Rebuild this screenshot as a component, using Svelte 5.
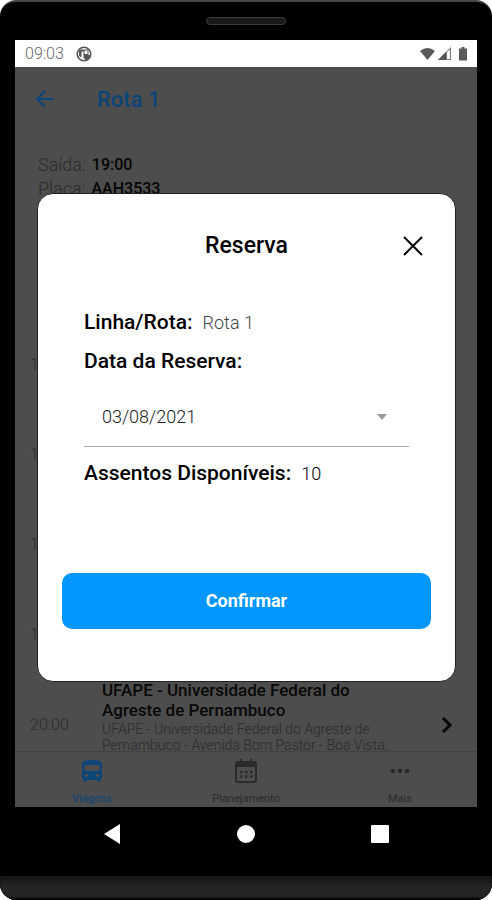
<script>
    let dates = ["03/08/2021"];
    let selected = dates[0];

    // earlier stops sit behind the dialog
    const stops = ["1", "1", "1", "1"];
</script>

<div class="phone">
    <div class="speaker"><span></span></div>

    <div class="screen">
        <div class="status">
            <span class="clock">09:03</span>
            <svg class="badge" width="16" height="16" viewBox="0 0 16 16">
                <circle cx="8" cy="8" r="6.800" fill="#fff" stroke="#555" stroke-width="1.600" />
                <path d="M4 3.500H12.500V9H9V12.500H7.500V5.500H5.500V11.500L3 10V5Z" fill="#555" />
                <path d="M8.500 4.500H11.500V8H8.500Z" fill="#fff" />
                <path d="M9 9H14.500Q13.500 13.500 9 15Z" fill="#555" />
            </svg>
            <svg class="signals" width="50" height="16" viewBox="0 0 50 16">
                <path d="M1 5Q8.500 -1 16 5L8.500 14Z" fill="#5a5a5a" />
                <path d="M19 14L32 1V14Z" fill="#777" />
                <path d="M19 14L27 6V14Z" fill="#555" />
                <path d="M28 6L31 3.500V13H28Z" fill="#fff" />
                <path d="M40 2.500h2.500V1h3v1.500H48V14.500H40Z" fill="#5a5a5a" />
            </svg>
        </div>

        <div class="app">
            <div class="content">
                <header>
                    <button class="back" aria-label="Voltar">
                        <svg width="20" height="20" viewBox="0 0 20 20" fill="none" stroke="currentColor" stroke-width="2">
                            <path d="M18.500 10H3M10 2L2 10L10 18" />
                        </svg>
                    </button>
                    <h1>Rota 1</h1>
                </header>

                <div class="info">
                    <p>Saída: <b>19:00</b></p>
                    <p>Placa: <b>AAH3533</b></p>
                </div>

                <div class="stops">
                    {#each stops as time}
                        <div class="stop"><span class="time">{time}</span></div>
                    {/each}
                    <div class="stop">
                        <span class="time">20:00</span>
                        <div class="place">
                            <h2>UFAPE - Universidade Federal do Agreste de Pernambuco</h2>
                            <p>UFAPE - Universidade Federal do Agreste de Pernambuco - Avenida Bom Pastor - Boa Vista,</p>
                        </div>
                        <svg class="chevron" width="12" height="18" viewBox="0 0 12 18" fill="none" stroke="#080808" stroke-width="3">
                            <path d="M2 2L9 9L2 16" />
                        </svg>
                    </div>
                </div>

                <nav class="tabs">
                    <a href="#viagens" class="active">
                        <svg width="22" height="24" viewBox="0 0 22 24">
                            <path fill="currentColor" fill-rule="evenodd" d="M1 5Q1 1 11 1Q21 1 21 5V18Q21 19.500 19.500 20.500V22Q19.500 23 18.500 23H17.500Q16.500 23 16.500 22V21H5.500V22Q5.500 23 4.500 23H3.500Q2.500 23 2.500 22V20.500Q1 19.500 1 18ZM3.500 6V12H18.500V6ZM5.500 14.500A1.800 1.800 0 1 0 5.500 18.100A1.800 1.800 0 1 0 5.500 14.500ZM16.500 14.500A1.800 1.800 0 1 0 16.500 18.100A1.800 1.800 0 1 0 16.500 14.500Z" />
                        </svg>
                        <span>Viagens</span>
                    </a>
                    <a href="#planejamento">
                        <svg width="22" height="24" viewBox="0 0 22 24" fill="none" stroke="currentColor">
                            <rect x="1" y="3" width="20" height="20" rx="2" stroke-width="2" />
                            <path d="M1 6H21" stroke-width="4" />
                            <path d="M6 0V4M16 0V4" stroke-width="2" />
                            <path d="M5 13H17.500M5 17.500H17.500" stroke-width="2.500" stroke-dasharray="2.500 2.500" />
                        </svg>
                        <span>Planejamento</span>
                    </a>
                    <a href="#mais">
                        <svg width="22" height="24" viewBox="0 0 22 24" fill="currentColor">
                            <circle cx="4" cy="12" r="2.300" />
                            <circle cx="11" cy="12" r="2.300" />
                            <circle cx="18" cy="12" r="2.300" />
                        </svg>
                        <span>Mais</span>
                    </a>
                </nav>
            </div>

            <div class="overlay">
                <form class="modal" on:submit|preventDefault>
                    <div class="modal-header">
                        <h3>Reserva</h3>
                        <button type="button" class="close" aria-label="Fechar">
                            <svg width="20" height="20" viewBox="0 0 20 20" fill="none" stroke="#000" stroke-width="2">
                                <path d="M1 1L19 19M19 1L1 19" />
                            </svg>
                        </button>
                    </div>
                    <div class="details">
                        <p><b>Linha/Rota:</b><span class="muted">Rota 1</span></p>
                        <label for="date">Data da Reserva:</label>
                        <div class="select">
                            <select id="date" bind:value={selected}>
                                {#each dates as date}
                                    <option value={date}>{date}</option>
                                {/each}
                            </select>
                            <svg width="10" height="6" viewBox="0 0 10 6"><path d="M0 0H10L5 6Z" fill="#999" /></svg>
                        </div>
                        <p><b>Assentos Disponíveis:</b><span>10</span></p>
                    </div>
                    <button class="confirm">Confirmar</button>
                </form>
            </div>
        </div>
    </div>

    <div class="keys">
        <button aria-label="Voltar"><svg width="20" height="20" viewBox="0 0 20 20"><path d="M18 0V20L2 10Z" fill="#fff" /></svg></button>
        <button aria-label="Início"><svg width="20" height="20" viewBox="0 0 20 20"><circle cx="10" cy="10" r="9" fill="#fff" /></svg></button>
        <button aria-label="Recentes"><svg width="20" height="20" viewBox="0 0 20 20"><rect x="1" y="1" width="18" height="18" rx="1" fill="#fff" /></svg></button>
    </div>
    <div class="chin"></div>
</div>

<style>
    :global(body) {
        background: #fff;
        font-family: Roboto, "Liberation Sans", sans-serif;
    }
    .phone {
        box-sizing: border-box;
        min-height: 100vh;
        display: flex;
        flex-direction: column;
        background: #000;
        border-top: 2px solid #484848;
        border-radius: 16px;
        overflow: hidden;
    }
    h1, h2, h3, p {
        margin: 0;
    }
    button {
        background: none;
        border: none;
        padding: 0;
        font-family: inherit;
        cursor: pointer;
    }
    svg {
        display: block;
        flex: none;
    }

    .speaker {
        height: 38px;
        display: flex;
        align-items: center;
        justify-content: center;
    }
    .speaker span {
        box-sizing: border-box;
        width: 80px;
        height: 8px;
        border: 1px solid #3c3c3c;
        border-radius: 4px;
        background: #181818;
    }

    .screen {
        flex: 1;
        display: flex;
        flex-direction: column;
        margin: 0 15px;
    }
    .status {
        height: 27px;
        display: flex;
        align-items: center;
        gap: 12px;
        padding: 0 8px 0 10px;
        background: #fff;
    }
    .clock {
        color: #666;
        font-size: 16px;
        font-weight: 300;
    }
    .signals {
        margin-left: auto;
    }

    .app {
        flex: 1;
        display: grid;
        background: #4d4d4d;
    }
    .content,
    .overlay {
        grid-area: 1 / 1;
        min-width: 0;
    }
    .content {
        display: flex;
        flex-direction: column;
    }
    header {
        display: flex;
        align-items: center;
        gap: 42px;
        height: 64px;
        padding: 0 20px;
        color: #0c4577;
    }
    .back {
        color: inherit;
    }
    h1 {
        font-size: 22px;
        font-weight: 500;
    }
    .info {
        padding: 22px 23px 0;
        color: #2b2b2b;
        font-size: 18px;
        font-weight: 300;
        line-height: 24px;
    }
    .info p {
        display: flex;
        gap: 6px;
    }
    .info b {
        color: #050505;
        font-size: 16px;
        font-weight: 500;
    }
    .stops {
        height: 431px;
        margin-top: auto;
    }
    .stop {
        display: flex;
        align-items: flex-start;
        height: 90px;
        padding: 0 24px 0 15px;
    }
    .time {
        width: 72px;
        color: #2b2b2b;
        font-size: 16px;
        line-height: 90px;
        font-weight: 300;
    }
    .place {
        flex: 1;
        max-width: 290px;
    }
    h2 {
        margin-bottom: 1px;
        color: #080808;
        font-size: 17px;
        font-weight: 500;
        line-height: 20px;
    }
    .place p {
        color: #2b2b2b;
        font-size: 14px;
        font-weight: 300;
        line-height: 16px;
    }
    .chevron {
        margin-left: auto;
        align-self: center;
    }
    .tabs {
        display: grid;
        grid-template-columns: repeat(3, 1fr);
        height: 56px;
        box-sizing: border-box;
        border-top: 1px solid #424242;
    }
    .tabs a {
        display: flex;
        flex-direction: column;
        align-items: center;
        gap: 8px;
        padding-top: 7px;
        color: #2b2b2b;
        font-size: 11px;
        line-height: 16px;
        text-decoration: none;
    }
    .tabs a.active {
        color: #0c4577;
    }

    .overlay {
        z-index: 1;
        display: flex;
        align-items: center;
        padding: 0 21px 0 22px;
    }
    .modal {
        flex: 1;
        padding: 32px 24px 52px;
        background: #fff;
        border: 1px solid #222;
        border-radius: 16px;
        color: #000;
    }
    .modal-header {
        display: grid;
        grid-template-columns: 36px 1fr 36px;
        align-items: center;
        height: 40px;
    }
    .modal-header h3 {
        grid-column: 2;
        font-size: 23px;
        font-weight: 500;
        text-align: center;
    }
    .close {
        display: grid;
        place-items: center;
        height: 36px;
    }
    .details {
        padding: 37px 22px 0;
        font-size: 21px;
        line-height: 39px;
    }
    .details p {
        display: flex;
        gap: 10px;
    }
    .details b,
    .details label {
        font-weight: 500;
    }
    .details label {
        display: block;
    }
    .details span {
        font-size: 18px;
        font-weight: 300;
    }
    .details .muted {
        color: #444;
    }
    .select {
        display: flex;
        align-items: center;
        height: 58px;
        margin-bottom: 7px;
        padding: 7px 22px 0 18px;
        border-bottom: 1px solid #aaa;
    }
    select {
        flex: 1;
        appearance: none;
        padding: 0;
        border: none;
        background: none;
        color: #222;
        font-family: inherit;
        font-size: 18px;
        font-weight: 300;
    }
    .confirm {
        display: block;
        width: 100%;
        height: 56px;
        margin-top: 80px;
        background: #0396ff;
        border-radius: 10px;
        color: #fff;
        font-size: 18px;
        font-weight: 700;
    }

    .keys {
        display: grid;
        grid-template-columns: repeat(3, 1fr);
        place-items: center;
        height: 54px;
        padding: 0 45px 15px;
    }
    .chin {
        height: 24px;
        background: linear-gradient(#141414, #262626 50%, #222);
        box-shadow: inset 0 -2px 2px #000;
    }
</style>
